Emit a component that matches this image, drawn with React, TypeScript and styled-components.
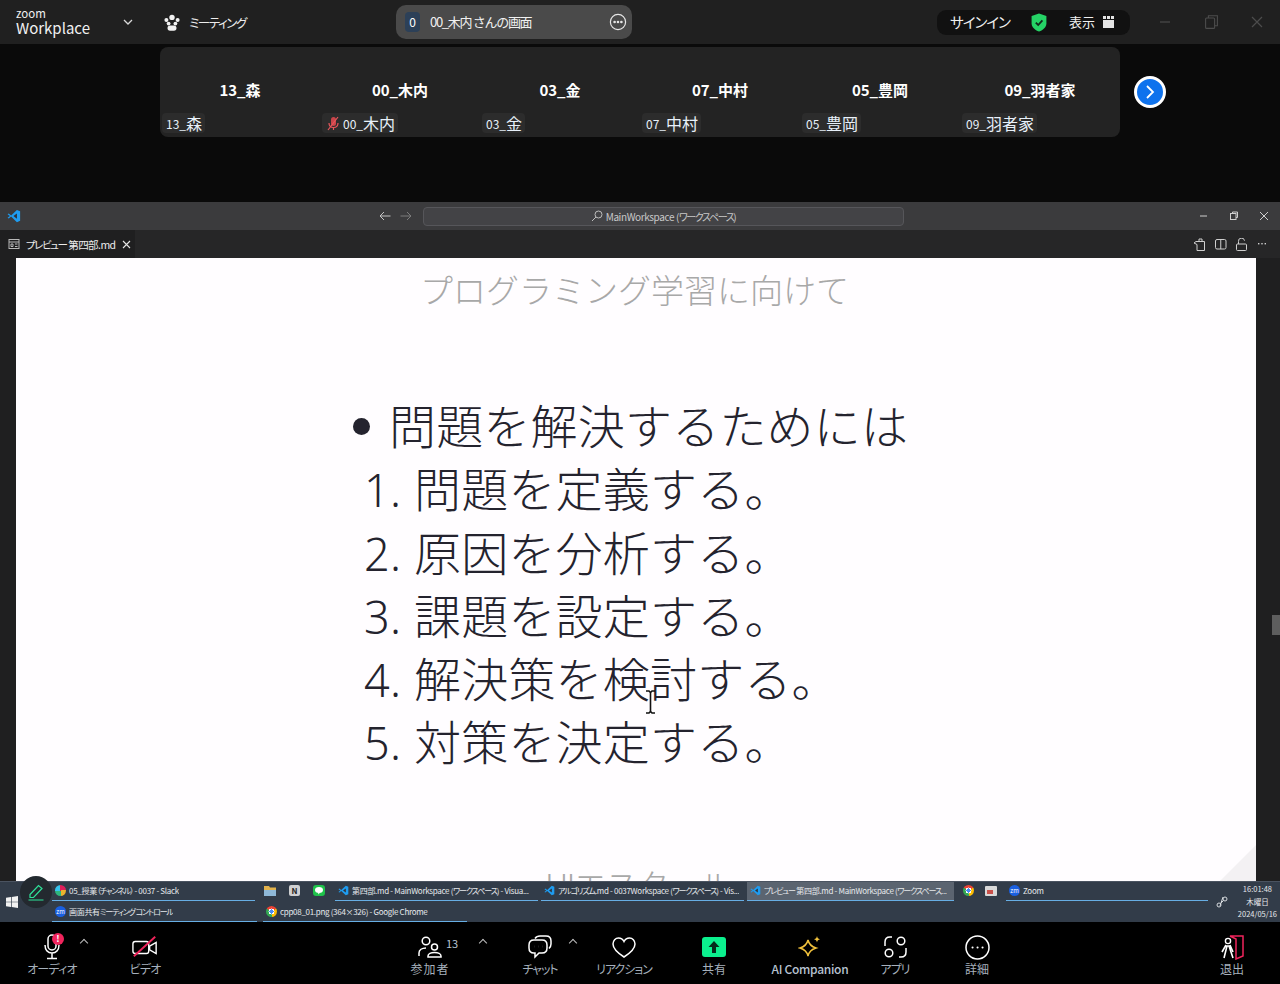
import styled, { createGlobalStyle } from "styled-components";

const FONT = `"Noto Sans CJK JP", "Noto Sans", sans-serif`;

const GlobalStyle = createGlobalStyle`
  html, body {
    margin: 0;
    padding: 0;
    background: #000;
  }
  * {
    box-sizing: border-box;
  }
`;

const participants = [
  { name: "13_森", tag: "森", num: "13_" },
  { name: "00_木内", tag: "木内", num: "00_", muted: true },
  { name: "03_金", tag: "金", num: "03_" },
  { name: "07_中村", tag: "中村", num: "07_" },
  { name: "05_豊岡", tag: "豊岡", num: "05_" },
  { name: "09_羽者家", tag: "羽者家", num: "09_" },
];

const steps = [
  "問題を定義する。",
  "原因を分析する。",
  "課題を設定する。",
  "解決策を検討する。",
  "対策を決定する。",
];

function VsLogo({ size = 14 }: { size?: number }) {
  return (
    <VsLogoSvg width={size} height={size} viewBox="0 0 24 24">
      <path d="M17 1.5 22.5 4v16L17 22.5 7 13l-4 3.2L1 15l4-3-4-3 2-1.2L7 11z" fill="#1f9cf0" />
      <path d="M17 7.5 11 12l6 4.5z" fill="#2d3138" />
    </VsLogoSvg>
  );
}

export default function App() {
  return (
    <Screen>
      <GlobalStyle />
      <TopBar>
        <Brand>
          <BrandSmall>zoom</BrandSmall>
          <BrandBig>Workplace</BrandBig>
        </Brand>
        <BrandChevron width="10" height="7" viewBox="0 0 10 7">
          <path d="M1 1l4 4 4-4" fill="none" stroke="#d8d8d8" strokeWidth="1.3" />
        </BrandChevron>
        <MeetingTab>
          <svg width="18" height="17" viewBox="0 0 18 17" fill="#f2f2f2">
            <circle cx="9" cy="3.4" r="2.7" />
            <circle cx="3.4" cy="6" r="2" />
            <circle cx="14.6" cy="6" r="2" />
            <circle cx="5.6" cy="9.6" r="1.9" />
            <circle cx="12.4" cy="9.6" r="1.9" />
            <rect x="4.5" y="11.5" width="9" height="5.2" rx="2.6" />
          </svg>
          <MeetingLabel>ミーティング</MeetingLabel>
        </MeetingTab>
        <SharePill>
          <ShareCount>0</ShareCount>
          <ShareName>00_木内 さんの画面</ShareName>
          <svg width="18" height="18" viewBox="0 0 18 18" fill="none" stroke="#e6e6e6" strokeWidth="1.2">
            <circle cx="9" cy="9" r="7.6" />
            <circle cx="5.6" cy="9" r=".7" fill="#e6e6e6" />
            <circle cx="9" cy="9" r=".7" fill="#e6e6e6" />
            <circle cx="12.4" cy="9" r=".7" fill="#e6e6e6" />
          </svg>
        </SharePill>
        <SignInPill>
          <SignInText>サインイン</SignInText>
          <svg width="16" height="19" viewBox="0 0 16 19">
            <path d="M8 .6 15.4 3v7.2c0 4-3.2 6.8-7.4 8.4C3.8 17 .6 14.2.6 10.2V3z" fill="#25d366" />
            <path d="M4.8 9.6 7.2 12l4.2-4.6" fill="none" stroke="#13291c" strokeWidth="1.8" />
          </svg>
          <ViewText>表示</ViewText>
          <svg width="11" height="12" viewBox="0 0 11 12" fill="#e4e4e4">
            <rect x="0" y="4" width="11" height="8" />
            <rect x="0" y="0" width="3" height="3" />
            <rect x="4" y="0" width="3" height="3" />
            <rect x="8" y="0" width="3" height="3" />
          </svg>
        </SignInPill>
        <WindowButtons>
          <svg width="12" height="12" viewBox="0 0 12 12" stroke="#4c4c4c" strokeWidth="1.2" fill="none">
            <path d="M1 6h10" />
          </svg>
          <svg width="13" height="14" viewBox="0 0 13 14" stroke="#4c4c4c" strokeWidth="1.1" fill="none">
            <rect x=".6" y="3" width="9" height="10.4" rx="1" />
            <path d="M3.4 3V.8h9v10H9.6" />
          </svg>
          <svg width="12" height="12" viewBox="0 0 12 12" stroke="#4c4c4c" strokeWidth="1.2" fill="none">
            <path d="M1 1l10 10M11 1 1 11" />
          </svg>
        </WindowButtons>
      </TopBar>

      <ThumbArea>
        <ThumbStrip>
          {participants.map((p) => (
            <Thumb key={p.name}>
              <ThumbName>{p.name}</ThumbName>
              <ThumbTag>
                {p.muted && (
                  <svg width="14" height="15" viewBox="0 0 14 15" fill="none">
                    <rect x="5" y="1" width="5" height="9" rx="2.5" fill="#c9454a" />
                    <path d="M3 7c0 3 2 4.5 4.5 4.5S12 10 12 7M7.5 12v2M2 14 12 1" stroke="#e8565c" strokeWidth="1.2" />
                  </svg>
                )}
                <TagNum>{p.num}</TagNum>
                {p.tag}
              </ThumbTag>
            </Thumb>
          ))}
        </ThumbStrip>
        <NextButton>
          <svg width="12" height="16" viewBox="0 0 12 16" fill="none" stroke="#fff" strokeWidth="1.8">
            <path d="M3 2l6 6-6 6" />
          </svg>
        </NextButton>
      </ThumbArea>

      <VsTitleBar>
        <VsLogoSlot>
          <VsLogo />
        </VsLogoSlot>
        <VsArrows>
          <svg width="12" height="10" viewBox="0 0 12 10" fill="none" stroke="#c4c4c4" strokeWidth="1">
            <path d="M11.5 5H1M5 1 1 5l4 4" />
          </svg>
          <svg width="12" height="10" viewBox="0 0 12 10" fill="none" stroke="#7c7c7c" strokeWidth="1">
            <path d="M.5 5H11M7 1l4 4-4 4" />
          </svg>
        </VsArrows>
        <VsSearch>
          <svg width="12" height="12" viewBox="0 0 12 12" fill="none" stroke="#bdbdbd" strokeWidth="1">
            <circle cx="7.5" cy="4.5" r="3.5" />
            <path d="M5 7 1 11" />
          </svg>
          <span>
            MainWorkspace (<Kana>ワークスペース</Kana>)
          </span>
        </VsSearch>
        <VsWindowButtons>
          <svg width="10" height="10" viewBox="0 0 10 10" stroke="#cfcfcf" fill="none">
            <path d="M1 5h7" />
          </svg>
          <svg width="10" height="10" viewBox="0 0 10 10" stroke="#cfcfcf" fill="none">
            <rect x="1.5" y="2.5" width="5.5" height="6" />
            <path d="M3.5 2.5v-1.5h5v5.5H7" />
          </svg>
          <svg width="10" height="10" viewBox="0 0 10 10" stroke="#cfcfcf" fill="none">
            <path d="M1 1l8 8M9 1 1 9" />
          </svg>
        </VsWindowButtons>
      </VsTitleBar>

      <VsTabBar>
        <VsTab>
          <svg width="12" height="12" viewBox="0 0 12 12" fill="none" stroke="#b8b8b8">
            <rect x="1" y="1.5" width="10" height="9" />
            <path d="M1 4h10M3 6h2v2.5H3zM7 6h2.5M7 8.5h2.5" />
          </svg>
          <VsTabName>
            <Kana>プレビュー</Kana> 第四部.md
          </VsTabName>
          <svg width="9" height="9" viewBox="0 0 9 9" stroke="#e6e6e6" strokeWidth="1.1">
            <path d="M1 1l7 7M8 1 1 8" />
          </svg>
        </VsTab>
        <VsTabActions>
          <svg width="14" height="13" viewBox="0 0 14 13" fill="none" stroke="#cfcfcf">
            <path d="M4 3.5h8.5v9H5V6.5L2 5l2-1.5zM7 3.5V1h3v2.5" />
          </svg>
          <svg width="12" height="12" viewBox="0 0 12 12" fill="none" stroke="#cfcfcf">
            <rect x=".5" y="1.5" width="10.5" height="9.5" rx="1.5" />
            <path d="M5.75 1.5v9.5" />
          </svg>
          <svg width="11" height="13" viewBox="0 0 11 13" fill="none" stroke="#cfcfcf">
            <rect x=".5" y="6" width="10" height="6.5" rx="1" />
            <path d="M2.5 6V3.5a3 3 0 0 1 6-.8" />
          </svg>
          <VsMore width="8" height="2" viewBox="0 0 8 2" fill="#cfcfcf">
            <rect x="0" y="0" width="1.4" height="1.4" />
            <rect x="3.3" y="0" width="1.4" height="1.4" />
            <rect x="6.6" y="0" width="1.4" height="1.4" />
          </VsMore>
        </VsTabActions>
      </VsTabBar>

      <Workspace>
        <Slide>
          <SlideTitle>プログラミング学習に向けて</SlideTitle>
          <SlideBody>
            <BulletLine>
              <BulletDot />
              問題を解決するためには
            </BulletLine>
            {steps.map((s, i) => (
              <StepLine key={s}>
                <StepNumber>{i + 1}.</StepNumber>
                {s}
              </StepLine>
            ))}
          </SlideBody>
          <NextTitle>UIエスタール</NextTitle>
          <CornerFold />
        </Slide>
        <ScrollThumb />
        <TextCursor width="11" height="24" viewBox="0 0 11 24" fill="none" stroke="#111" strokeWidth="1.6">
          <path d="M1 1h3l1.5 1.5L7 1h3M5.5 2.5v19M1 23h3l1.5-1.5L7 23h3" />
        </TextCursor>
      </Workspace>

      <Taskbar>
        <StartSlot>
          <svg width="12" height="12" viewBox="0 0 12 12" fill="#f2f2f2">
            <path d="M0 1.7 5 1v4.7H0zM5.7.9 12 0v5.7H5.7zM0 6.3h5V11l-5-.7zM5.7 6.3H12V12l-6.3-.9z" />
          </svg>
        </StartSlot>
        <TaskRows>
          <TaskRow>
            <TaskItem $width={203}>
              <SlackDot />
              <TaskText>
                05_授業<Kana>（チャンネル）</Kana> - 0037 - Slack
              </TaskText>
            </TaskItem>
            <QuickIcons $width={74} $spacing={13}>
              <svg width="12" height="10" viewBox="0 0 12 10">
                <path d="M0 0h5l1 1.5h6V10H0z" fill="#e3b34c" />
                <path d="M0 4h12v6H0z" fill="#8fb9d8" />
              </svg>
              <NotionMark>N</NotionMark>
              <svg width="12" height="11" viewBox="0 0 12 11">
                <rect width="12" height="11" rx="3" fill="#1fc24b" />
                <ellipse cx="6" cy="5" rx="4" ry="3" fill="#fff" />
                <path d="M5 7.5h2L5.5 9.5z" fill="#fff" />
              </svg>
            </QuickIcons>
            <TaskItem $width={203}>
              <VsLogo size={11} />
              <TaskText>
                第四部.md - MainWorkspace (<Kana>ワークスペース</Kana>) - Visua...
              </TaskText>
            </TaskItem>
            <TaskItem $width={203}>
              <VsLogo size={11} />
              <TaskText>
                <Kana>アルゴリズム</Kana>.md - 0037Workspace (<Kana>ワークスペース</Kana>) - Vis...
              </TaskText>
            </TaskItem>
            <TaskItem $width={207} $active>
              <VsLogo size={11} />
              <TaskText>
                <Kana>プレビュー</Kana> 第四部.md - MainWorkspace (<Kana>ワークスペース</Kana>...
              </TaskText>
            </TaskItem>
            <QuickIcons $width={46} $spacing={11}>
              <ChromeDot />
              <svg width="12" height="10" viewBox="0 0 12 10">
                <rect width="12" height="10" rx="1" fill="#d9d9d9" />
                <rect x="2" y="4" width="6" height="4" fill="#c9504a" />
              </svg>
            </QuickIcons>
            <TaskItem $width={202}>
              <ZmCircle>zm</ZmCircle>
              <TaskText>Zoom</TaskText>
            </TaskItem>
          </TaskRow>
          <TaskRow>
            <TaskItem $width={205}>
              <ZmCircle>zm</ZmCircle>
              <TaskText>
                画面共有<Kana>ミーティング コントロール</Kana>
              </TaskText>
            </TaskItem>
            <TaskItem $width={204} $offset={3}>
              <ChromeDot />
              <TaskText>cpp08_01.png (364×326) - Google Chrome</TaskText>
            </TaskItem>
          </TaskRow>
        </TaskRows>
        <Tray>
          <svg width="12" height="12" viewBox="0 0 12 12" fill="none" stroke="#d6dade">
            <circle cx="3" cy="9" r="2" />
            <circle cx="9" cy="3" r="2" />
            <path d="M4.5 7.5l3-3M7 1l-3 9" />
          </svg>
          <Clock>
            <span>16:01:48</span>
            <span>木曜日</span>
            <span>2024/05/16</span>
          </Clock>
        </Tray>
        <PenButton>
          <svg width="18" height="18" viewBox="0 0 18 18" fill="none" stroke="#2fe39a" strokeWidth="1.2">
            <path d="M3 11.5 11.5 2.5l3.5 3-8.5 9H3zM1.5 17h15" />
          </svg>
        </PenButton>
      </Taskbar>

      <Toolbar>
        <ToolGroup>
          <ToolItem $width={104}>
            <ToolIcon>
              <svg width="24" height="26" viewBox="0 0 24 26" fill="none" stroke="#fff" strokeWidth="1.5">
                <rect x="8" y="1" width="8" height="15" rx="4" />
                <path d="M5 11c0 5 3 8 7 8s7-3 7-8M12 19v5M7 24.5h10" />
              </svg>
              <AlertDot>!</AlertDot>
              <Caret />
            </ToolIcon>
            <ToolLabel $spacing={-0.8}>オーディオ</ToolLabel>
          </ToolItem>
          <ToolItem $width={82}>
            <ToolIcon>
              <svg width="26" height="24" viewBox="0 0 28 24" fill="none" strokeWidth="1.5">
                <rect x="1" y="6" width="17" height="13" rx="2.5" stroke="#fff" />
                <path d="M19 11l7-4v12l-7-4z" stroke="#fff" />
                <path d="M2 22 25 1" stroke="#f0245c" strokeWidth="2" />
              </svg>
            </ToolIcon>
            <ToolLabel $spacing={-0.8}>ビデオ</ToolLabel>
          </ToolItem>
        </ToolGroup>
        <CenterGroup>
          <ToolItem $width={90}>
            <ToolIcon>
              <svg width="24" height="22" viewBox="0 0 24 22" fill="none" stroke="#fff" strokeWidth="1.5">
                <circle cx="8" cy="5" r="3.8" />
                <circle cx="16.5" cy="11" r="3" />
                <path d="M1 20v-3c0-3 3-5 7-5M10 21v-1c0-2 3-3.5 6.5-3.5S23 18 23 20v1z" />
              </svg>
              <CountText>13</CountText>
              <Caret $right={-44} />
            </ToolIcon>
            <ToolLabel $spacing={1}>参加者</ToolLabel>
          </ToolItem>
          <ToolItem $width={90} $shift={20}>
            <ToolIcon>
              <svg width="24" height="24" viewBox="0 0 24 24" fill="none" stroke="#fff" strokeWidth="1.5">
                <path d="M7 3.5c1-1.5 3-2.5 5-2.5h6c3 0 5 2 5 5v3c0 2-1 3.5-2 4.5" />
                <path d="M6 5h8c3 0 5 2 5 5v3c0 3-2 5-5 5h-3l-4 4v-4H6c-3 0-5-2-5-5v-3c0-3 2-5 5-5z" />
                <path d="M6 11.5h.1M10 11.5h.1M14 11.5h.1" strokeWidth="1.8" />
              </svg>
              <Caret $right={-24} />
            </ToolIcon>
            <ToolLabel $spacing={-1}>チャット</ToolLabel>
          </ToolItem>
          <ToolItem $width={78}>
            <ToolIcon>
              <svg width="24" height="21" viewBox="0 0 24 21" fill="none" stroke="#fff" strokeWidth="1.5">
                <path d="M12 20C5 15.5 1 12 1 7c0-3.5 2.5-6 5.5-6S11 2.5 12 4.5C13 2.5 14.5 1 17.5 1S23 3.5 23 7c0 5-4 8.5-11 13z" />
              </svg>
            </ToolIcon>
            <ToolLabel $spacing={-1}>リアクション</ToolLabel>
          </ToolItem>
          <ToolItem $width={78} $shift={12}>
            <ToolIcon>
              <ShareIcon>
                <svg width="14" height="14" viewBox="0 0 14 14" fill="#062b1c">
                  <path d="M7 1l5.5 6H9v6H5V7H1.5z" />
                </svg>
              </ShareIcon>
            </ToolIcon>
            <ToolLabel>共有</ToolLabel>
          </ToolItem>
          <ToolItem $width={100} $shift={7}>
            <ToolIcon>
              <svg width="24" height="24" viewBox="0 0 24 24" fill="none">
                <path d="M10 5c1 4.5 3 6.5 8 8-5 1.5-7 3.5-8 8-1-4.5-3-6.5-8-8 5-1.5 7-3.5 8-8z" stroke="#f2c23c" strokeWidth="1.5" />
                <path d="M19 1c.4 2 1.1 2.8 3 3.2-1.9.4-2.6 1.2-3 3.2-.4-2-1.1-2.8-3-3.2 1.9-.4 2.6-1.2 3-3.2z" fill="#f2c23c" />
              </svg>
            </ToolIcon>
            <AiLabel $spacing={-0.3}>AI Companion</AiLabel>
          </ToolItem>
          <ToolItem $width={74} $shift={-2}>
            <ToolIcon>
              <svg width="23" height="22" viewBox="0 0 23 22" fill="none" stroke="#fff" strokeWidth="1.5">
                <path d="M1 10V6c0-3 2-5 5-5h2" />
                <circle cx="17" cy="5" r="3.8" />
                <circle cx="5" cy="17" r="3.8" />
                <path d="M22 12v4c0 3-2 5-5 5h-2" />
              </svg>
            </ToolIcon>
            <ToolLabel $spacing={-1}>アプリ</ToolLabel>
          </ToolItem>
          <ToolItem $width={90}>
            <ToolIcon>
              <svg width="25" height="25" viewBox="0 0 25 25" fill="none" stroke="#fff" strokeWidth="1.5">
                <circle cx="12.5" cy="12.5" r="11.5" />
                <path d="M7.5 12.5h.1M12.5 12.5h.1M17.5 12.5h.1" strokeWidth="2" strokeLinecap="round" />
              </svg>
            </ToolIcon>
            <ToolLabel>詳細</ToolLabel>
          </ToolItem>
        </CenterGroup>
        <LeaveGroup>
          <ToolItem $width={60}>
            <ToolIcon>
              <svg width="24" height="26" viewBox="0 0 24 26" fill="none">
                <path d="M10 2h13v20l-7 3V5z" stroke="#f0245c" strokeWidth="1.5" />
                <circle cx="8" cy="7" r="2.6" stroke="#fff" strokeWidth="1.4" />
                <path d="M6 11 2 18M10 11l3 7M7 12l-3 12M9 12l4 12M5 12h5" stroke="#fff" strokeWidth="1.6" />
              </svg>
            </ToolIcon>
            <ToolLabel>退出</ToolLabel>
          </ToolItem>
        </LeaveGroup>
      </Toolbar>
    </Screen>
  );
}

const Screen = styled.div`
  width: 1280px;
  height: 984px;
  overflow: hidden;
  display: flex;
  flex-direction: column;
  font-family: ${FONT};
  background: #000;
  color: #fff;
`;

const Kana = styled.span`
  font-feature-settings: "palt";
  letter-spacing: -0.14em;
`;

const VsLogoSvg = styled.svg`
  flex: none;
`;

const TopBar = styled.header`
  height: 44px;
  flex: none;
  background: #202020;
  display: flex;
  align-items: center;
  padding-left: 16px;
`;

const Brand = styled.div`
  width: 107px;
  margin-top: -2px;
  display: flex;
  flex-direction: column;
  color: #f1f1f1;
`;

const BrandSmall = styled.span`
  font-size: 11.5px;
  line-height: 12px;
`;

const BrandBig = styled.span`
  font-size: 15px;
  line-height: 17px;
`;

const BrandChevron = styled.svg`
  flex: none;
`;

const MeetingTab = styled.div`
  margin-left: 30px;
  width: 233px;
  display: flex;
  align-items: center;
  gap: 8px;
`;

const MeetingLabel = styled.span`
  font-size: 12.5px;
  font-feature-settings: "palt";
  letter-spacing: -1.4px;
  color: #ececec;
`;

const SharePill = styled.div`
  width: 236px;
  height: 34px;
  background: #4a4a4a;
  border-radius: 10px;
  display: flex;
  align-items: center;
  padding: 0 5px 0 9px;
`;

const ShareCount = styled.span`
  width: 15px;
  height: 20px;
  border-radius: 4px;
  background: #2c4058;
  font-size: 12px;
  line-height: 20px;
  text-align: center;
`;

const ShareName = styled.span`
  flex: 1;
  margin: -2px 0 0 10px;
  font-size: 13px;
  letter-spacing: -1.3px;
  color: #f1f1f1;
`;

const SignInPill = styled.div`
  margin-left: 305px;
  width: 193px;
  height: 25px;
  background: #111;
  border-radius: 9px;
  display: flex;
  align-items: center;
  padding-left: 13px;
`;

const SignInText = styled.span`
  width: 81px;
  margin-top: -2px;
  font-size: 14.5px;
  font-feature-settings: "palt";
  letter-spacing: -1px;
  color: #f0f0f0;
`;

const ViewText = styled.span`
  margin: -2px 7px 0 22px;
  width: 27px;
  font-size: 13px;
  color: #f0f0f0;
`;

const WindowButtons = styled.div`
  margin-left: 29px;
  width: 104px;
  display: flex;
  justify-content: space-between;
  align-items: center;
`;

const ThumbArea = styled.section`
  height: 158px;
  flex: none;
  background: #0a0a0a;
  display: flex;
  align-items: flex-start;
  padding: 3px 0 0 160px;
`;

const ThumbStrip = styled.div`
  width: 960px;
  height: 90px;
  background: #232323;
  border-radius: 8px;
  display: grid;
  grid-template-columns: repeat(6, 1fr);
`;

const Thumb = styled.div`
  display: flex;
  flex-direction: column;
  align-items: flex-start;
  padding: 32px 0 0 2px;
`;

const ThumbName = styled.div`
  align-self: center;
  font-size: 15px;
  line-height: 24px;
  font-weight: 700;
  margin: -1px 0 0 -2px;
`;

const ThumbTag = styled.div`
  margin-top: 11px;
  height: 20px;
  padding: 0 3px 0 4px;
  background: #2c2c2c;
  border-radius: 4px;
  display: flex;
  align-items: center;
  font-size: 16px;
  color: #e8f1fa;
  svg {
    margin-right: 3px;
  }
`;

const TagNum = styled.span`
  font-size: 12px;
`;

const NextButton = styled.div`
  margin: 29px 0 0 14px;
  width: 32px;
  height: 32px;
  border-radius: 50%;
  border: 3px solid #fff;
  background: #0e72ed;
  display: flex;
  align-items: center;
  justify-content: center;
`;

const VsTitleBar = styled.div`
  height: 28px;
  flex: none;
  background: #3b3b3d;
  display: flex;
  align-items: center;
  padding-left: 7px;
`;

const VsLogoSlot = styled.div`
  width: 372px;
  display: flex;
`;

const VsArrows = styled.div`
  width: 44px;
  display: flex;
  gap: 9px;
`;

const VsSearch = styled.div`
  width: 481px;
  height: 19px;
  border: 1px solid #56565a;
  border-radius: 4px;
  background: #434346;
  display: flex;
  align-items: center;
  justify-content: center;
  gap: 3px;
  font-size: 10px;
  letter-spacing: -0.4px;
  color: #c8c8c8;
`;

const VsWindowButtons = styled.div`
  margin-left: 295px;
  width: 70px;
  display: flex;
  justify-content: space-between;
`;

const VsTabBar = styled.div`
  height: 28px;
  flex: none;
  background: #262627;
  display: flex;
  align-items: center;
  justify-content: space-between;
`;

const VsTab = styled.div`
  width: 135px;
  height: 28px;
  background: #1f1f20;
  padding-left: 8px;
  display: flex;
  align-items: center;
  gap: 6px;
`;

const VsTabName = styled.span`
  font-size: 10.5px;
  letter-spacing: -0.55px;
  white-space: nowrap;
  color: #ececec;
`;

const VsTabActions = styled.div`
  display: flex;
  align-items: center;
  gap: 9px;
  padding-right: 14px;
`;

const VsMore = styled.svg`
  margin-left: 2px;
`;

const Workspace = styled.main`
  position: relative;
  height: 623px;
  flex: none;
  background: #1f1f20;
  padding: 0 24px 0 16px;
`;

const Slide = styled.div`
  position: relative;
  height: 100%;
  overflow: hidden;
  background: #fffdff;
  display: flex;
  flex-direction: column;
  align-items: center;
`;

const SlideTitle = styled.h1`
  margin: 7px 0 0 -3px;
  font-size: 33px;
  line-height: 48px;
  font-weight: 300;
  color: #a8a8a8;
`;

const SlideBody = styled.div`
  align-self: flex-start;
  margin: 79px 0 0 337px;
  color: #24232e;
  font-size: 47px;
  font-weight: 300;
  letter-spacing: 0.2px;
  line-height: 63.3px;
`;

const BulletLine = styled.div`
  display: flex;
  align-items: center;
  white-space: nowrap;
`;

const BulletDot = styled.span`
  width: 17px;
  height: 17px;
  margin: 6px 19px 0 0;
  border-radius: 50%;
  background: #24232e;
`;

const StepLine = styled.div`
  display: flex;
  height: 63.3px;
  white-space: nowrap;
  padding-left: 11px;
`;

const StepNumber = styled.span`
  width: 50px;
  margin-top: 3px;
  font-family: "Noto Sans", sans-serif;
  font-weight: 300;
  font-size: 45px;
`;

const NextTitle = styled.div`
  position: absolute;
  left: 529px;
  top: 606px;
  height: 17px;
  overflow: hidden;
  font-size: 33px;
  line-height: 40px;
  font-weight: 300;
  letter-spacing: -1.7px;
  color: #a8a8a8;
  white-space: nowrap;
`;

const CornerFold = styled.div`
  position: absolute;
  right: 0;
  bottom: 0;
  width: 0;
  height: 0;
  border-style: solid;
  border-width: 0 0 36px 36px;
  border-color: transparent transparent #f3f1f3 transparent;
`;

const ScrollThumb = styled.div`
  position: absolute;
  right: 0;
  top: 357px;
  width: 8px;
  height: 20px;
  background: #5e5e5e;
`;

const TextCursor = styled.svg`
  position: absolute;
  left: 645px;
  top: 432px;
`;

const Taskbar = styled.div`
  position: relative;
  height: 41px;
  flex: none;
  background: #323c49;
  border-top: 1px solid #4a5360;
  display: flex;
`;

const StartSlot = styled.div`
  width: 52px;
  display: flex;
  align-items: center;
  padding-left: 6px;
`;

const TaskRows = styled.div`
  width: 1160px;
  display: flex;
  flex-direction: column;
`;

const TaskRow = styled.div`
  height: 19px;
  display: flex;
  gap: 3px;
  margin-bottom: 2px;
`;

const TaskItem = styled.div<{ $width: number; $active?: boolean; $offset?: number }>`
  width: ${(p) => p.$width}px;
  margin-left: ${(p) => p.$offset ?? 0}px;
  height: 19px;
  padding: 0 0 2px 3px;
  display: flex;
  align-items: center;
  gap: 3px;
  background: ${(p) => (p.$active ? "#5b6470" : "transparent")};
  border-bottom: 1px solid #67aee4;
  overflow: hidden;
`;

const TaskText = styled.span`
  font-size: 8px;
  letter-spacing: -0.3px;
  white-space: nowrap;
  overflow: hidden;
  color: #e6e9ec;
`;

const QuickIcons = styled.div<{ $width: number; $spacing: number }>`
  width: ${(p) => p.$width}px;
  height: 19px;
  padding: 0 0 2px 6px;
  display: flex;
  align-items: center;
  gap: ${(p) => p.$spacing}px;
`;

const NotionMark = styled.span`
  width: 11px;
  height: 11px;
  background: #cfd0d2;
  color: #222;
  font-size: 8px;
  line-height: 11px;
  font-weight: 700;
  text-align: center;
  border-radius: 2px;
`;

const SlackDot = styled.span`
  flex: none;
  width: 11px;
  height: 11px;
  border-radius: 50%;
  background: conic-gradient(#e01e5a 0 25%, #ecb22e 0 50%, #2eb67d 0 75%, #36c5f0 0);
`;

const ChromeDot = styled.span`
  flex: none;
  width: 11px;
  height: 11px;
  border-radius: 50%;
  background: radial-gradient(#4b8bf5 0 27%, #fff 28% 38%, transparent 39%),
    conic-gradient(from -60deg, #ea4335 0 33%, #fbbc05 0 66%, #34a853 0);
`;

const ZmCircle = styled.span`
  flex: none;
  width: 11px;
  height: 11px;
  border-radius: 50%;
  background: #1a5fe0;
  font-size: 6px;
  line-height: 11px;
  text-align: center;
  color: #fff;
`;

const Tray = styled.div`
  flex: 1;
  display: flex;
  align-items: center;
  gap: 8px;
  padding-left: 4px;
`;

const Clock = styled.div`
  display: flex;
  flex-direction: column;
  align-items: center;
  font-size: 7.5px;
  line-height: 12.5px;
  color: #e6e9ec;
  margin-left: auto;
  padding-right: 3px;
`;

const PenButton = styled.div`
  position: absolute;
  left: 20px;
  top: -6px;
  width: 32px;
  height: 32px;
  border-radius: 50%;
  background: #23292f;
  display: flex;
  align-items: center;
  justify-content: center;
`;

const Toolbar = styled.footer`
  height: 62px;
  flex: none;
  background: #000;
  display: flex;
`;

const ToolGroup = styled.div`
  display: flex;
`;

const CenterGroup = styled.div`
  display: flex;
  margin-left: 199px;
`;

const LeaveGroup = styled.div`
  display: flex;
  margin-left: auto;
  padding-right: 18px;
`;

const ToolItem = styled.div<{ $width: number; $shift?: number }>`
  width: ${(p) => p.$width}px;
  margin-left: ${(p) => p.$shift ?? 0}px;
  display: flex;
  flex-direction: column;
  align-items: center;
  padding-top: 11px;
`;

const ToolIcon = styled.div`
  position: relative;
  height: 28px;
  display: flex;
  align-items: center;
  justify-content: center;
`;

const ToolLabel = styled.span<{ $spacing?: number }>`
  font-size: 12px;
  line-height: 16px;
  font-feature-settings: "palt";
  letter-spacing: ${(p) => p.$spacing ?? 0}px;
  white-space: nowrap;
  color: #a6b0bc;
`;

const AiLabel = styled(ToolLabel)`
  font-weight: 500;
  color: #b6c2d0;
`;

const AlertDot = styled.span`
  position: absolute;
  top: 0;
  right: 0;
  width: 12px;
  height: 12px;
  border-radius: 50%;
  background: #f0245c;
  font-size: 9px;
  line-height: 12px;
  font-weight: 700;
  text-align: center;
`;

const Caret = styled.span<{ $right?: number }>`
  position: absolute;
  top: 7px;
  right: ${(p) => p.$right ?? -23}px;
  width: 6px;
  height: 6px;
  border-left: 1px solid #bdbdbd;
  border-top: 1px solid #bdbdbd;
  transform: rotate(45deg);
`;

const CountText = styled.span`
  position: absolute;
  left: 28px;
  top: 3px;
  font-size: 11px;
  line-height: 14px;
  color: #b6c2d0;
`;

const ShareIcon = styled.div`
  width: 24px;
  height: 20px;
  border-radius: 3px;
  background: #0bf08e;
  display: flex;
  align-items: center;
  justify-content: center;
`;
